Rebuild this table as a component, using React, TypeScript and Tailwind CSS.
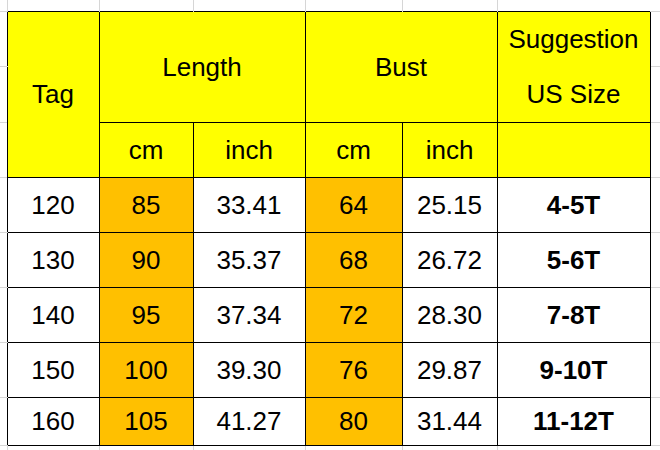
const rows = [
  { tag: "120", lenCm: "85", lenIn: "33.41", bustCm: "64", bustIn: "25.15", size: "4-5T" },
  { tag: "130", lenCm: "90", lenIn: "35.37", bustCm: "68", bustIn: "26.72", size: "5-6T" },
  { tag: "140", lenCm: "95", lenIn: "37.34", bustCm: "72", bustIn: "28.30", size: "7-8T" },
  { tag: "150", lenCm: "100", lenIn: "39.30", bustCm: "76", bustIn: "29.87", size: "9-10T" },
  { tag: "160", lenCm: "105", lenIn: "41.27", bustCm: "80", bustIn: "31.44", size: "11-12T" },
];

// grid line colour of the spreadsheet around the table
const grid = "border-[#d6d6d6]";

function EdgeLeft() {
  return <td className={`p-0 border-b ${grid}`} />;
}

function EdgeRight() {
  return <td className={`p-0 border-b ${grid}`} />;
}

export default function App() {
  const cell = "border border-black p-0 text-center leading-none";
  const yellow = `${cell} bg-[#ffff00]`;
  const orange = `${cell} bg-[#ffc000]`;
  const white = `${cell} bg-white`;

  return (
    <div className="w-[660px] h-[450px] overflow-hidden bg-white text-black font-['Liberation_Sans',Arial,sans-serif] text-[26px]">
      <table className="w-[660px] table-fixed border-collapse">
        <colgroup>
          <col className="w-[7px]" />
          <col className="w-[92px]" />
          <col className="w-[94px]" />
          <col className="w-[112px]" />
          <col className="w-[97px]" />
          <col className="w-[95px]" />
          <col className="w-[153px]" />
          <col className="w-[10px]" />
        </colgroup>
        <tbody>
          {/* strip of sheet above the table */}
          <tr className="h-[11px]">
            <td className={`p-0 border-r border-b ${grid}`} />
            <td className={`p-0 border-r ${grid}`} />
            <td className={`p-0 border-r ${grid}`} />
            <td className={`p-0 border-r ${grid}`} />
            <td className={`p-0 border-r ${grid}`} />
            <td className={`p-0 border-r ${grid}`} />
            <td className="p-0" />
            <td className={`p-0 border-b ${grid}`} />
          </tr>

          <tr className="h-[55px]">
            <EdgeLeft />
            <td rowSpan={3} className={yellow}>Tag</td>
            <td rowSpan={2} colSpan={2} className={yellow}>Length</td>
            <td rowSpan={2} colSpan={2} className={yellow}>Bust</td>
            <td rowSpan={2} className={`${yellow} !leading-[55px]`}>
              Suggestion
              <br />
              US Size
            </td>
            <EdgeRight />
          </tr>
          <tr className="h-[55px]">
            <EdgeLeft />
            <EdgeRight />
          </tr>
          <tr className="h-[55px]">
            <EdgeLeft />
            <td className={yellow}>cm</td>
            <td className={yellow}>inch</td>
            <td className={yellow}>cm</td>
            <td className={yellow}>inch</td>
            <td className={yellow} />
            <EdgeRight />
          </tr>

          {rows.map((r, i) => (
            <tr key={r.tag} className={i === rows.length - 1 ? "h-[48px]" : "h-[55px]"}>
              <EdgeLeft />
              <td className={white}>{r.tag}</td>
              <td className={orange}>{r.lenCm}</td>
              <td className={white}>{r.lenIn}</td>
              <td className={orange}>{r.bustCm}</td>
              <td className={white}>{r.bustIn}</td>
              <td className={`${white} font-bold`}>{r.size}</td>
              <EdgeRight />
            </tr>
          ))}

          {/* strip of sheet below the table */}
          <tr className="h-[6px]">
            <td className={`p-0 border-r ${grid}`} />
            <td className={`p-0 border-r ${grid}`} />
            <td className={`p-0 border-r ${grid}`} />
            <td className={`p-0 border-r ${grid}`} />
            <td className={`p-0 border-r ${grid}`} />
            <td className={`p-0 border-r ${grid}`} />
            <td className="p-0" />
            <td className="p-0" />
          </tr>
        </tbody>
      </table>
    </div>
  );
}
